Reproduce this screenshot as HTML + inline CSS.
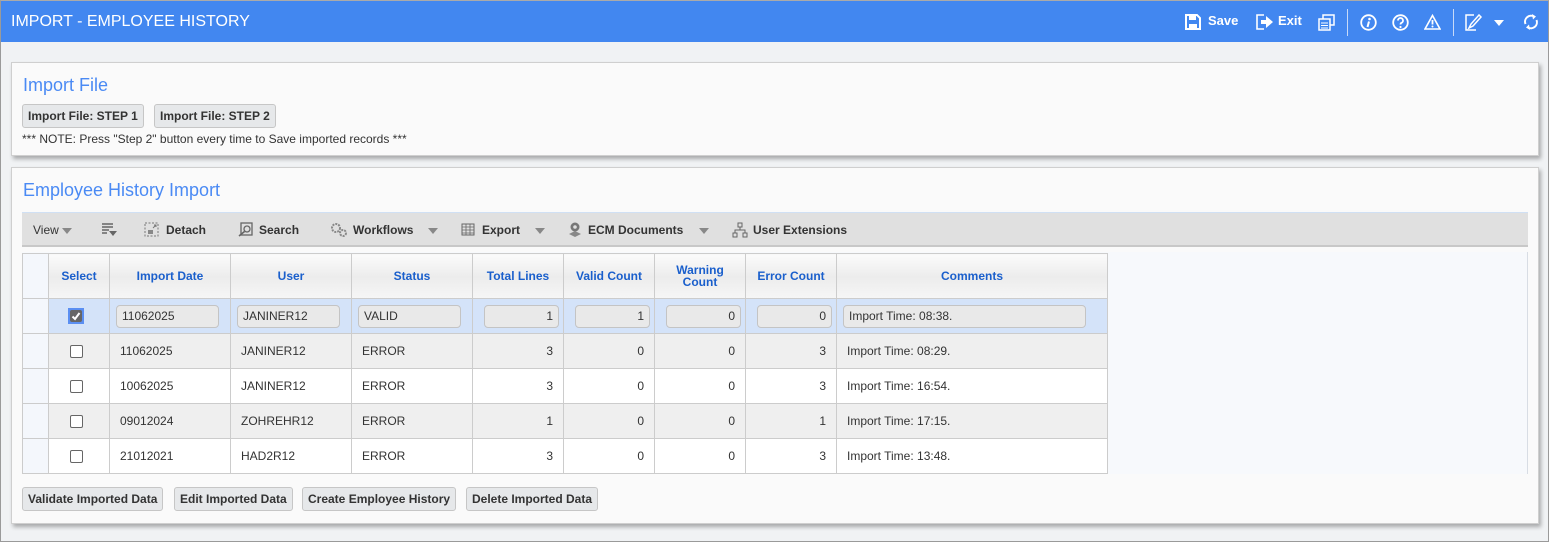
<!DOCTYPE html>
<html><head><meta charset="utf-8">
<style>
*{box-sizing:border-box;margin:0;padding:0}
body{width:1549px;height:542px;overflow:hidden;font-family:"Liberation Sans",Arial,sans-serif;font-size:12px;color:#333;background:#f0f2f4;position:relative}
.frame{position:absolute;left:0;top:0;width:1549px;height:542px;border:1px solid #9a9a9a;border-top:1px solid #aaa}
.hdr{position:absolute;left:1px;top:1px;width:1547px;height:41px;background:#4287f0;color:#fff}
.hdr .t{position:absolute;left:10px;top:12px;font-size:16px}
.hi{position:absolute;top:12px;color:#fff;font-weight:bold;font-size:13px}
.sep{position:absolute;top:8px;width:1px;height:27px;background:#c8daf8}
.panel{position:absolute;left:11px;width:1528px;background:#fafafa;border:1px solid #cfcfcf;box-shadow:2px 3px 4px rgba(0,0,0,.3)}
.ptitle{position:absolute;left:11px;color:#4a8af4;font-size:18px}
.btn{position:absolute;height:24px;background:#e6e8ea;border:1px solid #c6c6c6;border-radius:3px;font-weight:bold;font-size:12px;line-height:22px;padding:0 5px;color:#333;white-space:nowrap}
.tb{position:absolute;left:22px;top:212px;width:1506px;height:35px;background:#e0e0e0;border-top:1px solid #d0e0f4;border-bottom:2px solid #c8c8c8}
.tbi{position:absolute;top:10px;font-size:12px;font-weight:bold;color:#333}
.ar{display:inline-block;width:0;height:0;border-left:5px solid transparent;border-right:5px solid transparent;border-top:6px solid #888;vertical-align:middle}
.grid{position:absolute;left:22px;top:252px;width:1506px;height:222px;background:#f7f9fc;border-right:1px solid #d8dde4}
table{position:absolute;left:22px;top:253px;border-collapse:collapse;table-layout:fixed}
td,th{border:1px solid #cccccc;height:35px;font-size:12px;padding:0 10px;white-space:nowrap}
th{height:45px;color:#1a5fcc;font-weight:bold;background:linear-gradient(#fbfbfb,#ececec 50%,#f6f6f6);text-align:center;line-height:12px}
tr.s td{background:#d4e3f9}
tr.g td{background:#efefef}
tr.w td{background:#fff}
td.n{text-align:right}
td.c{text-align:center;padding:0 6px 0 0}
td.rn{background:#f4f7fc!important}
td.ip{padding:0}
.inp{height:23px;background:#e9e9e9;border:1px solid #c4c4c4;border-radius:4px;line-height:21px;padding:0 5px}
.it{width:103px;margin-left:6px}
.in{width:75px;margin-left:11px;text-align:right}
.ic{width:243px;margin-left:6px}
.cb{display:inline-block;width:13px;height:13px;border:1px solid #666;border-radius:2px;background:#fff;vertical-align:middle}
.cbk{display:inline-block;width:16px;height:16px;background:#5b8ff2;padding:2px;vertical-align:middle}
.cbk span{display:block;width:12px;height:12px;background:#666;border-radius:2px;position:relative}
</style></head><body>
<div class="frame"></div>
<div class="hdr">
<div class="t">IMPORT - EMPLOYEE HISTORY</div>
<svg style="position:absolute;left:1184px;top:13px" width="16" height="16" viewBox="0 0 16 16"><path d="M1 1h11l3 3v11H1z" fill="none" stroke="#fff" stroke-width="2"/><rect x="4" y="2" width="7" height="4" fill="#fff"/><rect x="4" y="10" width="8" height="4" fill="#fff"/></svg>
<div class="hi" style="left:1207px">Save</div>
<svg style="position:absolute;left:1255px;top:13px" width="18" height="16" viewBox="0 0 18 16"><path d="M8 1H1v14h7" fill="none" stroke="#fff" stroke-width="1.6"/><path d="M5 6h5V2l7 6-7 6v-4H5z" fill="#fff"/></svg>
<div class="hi" style="left:1277px">Exit</div>
<svg style="position:absolute;left:1317px;top:13px" width="17" height="17" viewBox="0 0 17 17"><rect x="5" y="1" width="11" height="10" fill="none" stroke="#fff" stroke-width="1.5"/><rect x="1" y="5" width="11" height="11" fill="#4287f0" stroke="#fff" stroke-width="1.5"/><path d="M3 9h7M3 11.5h7M3 14h7" stroke="#fff"/></svg>
<div class="sep" style="left:1346px"></div>
<svg style="position:absolute;left:1359px;top:13px" width="17" height="17" viewBox="0 0 17 17"><circle cx="8.5" cy="8.5" r="7.3" fill="none" stroke="#fff" stroke-width="1.8"/><circle cx="9.5" cy="5" r="1.3" fill="#fff"/><path d="M9 7.5l-1.5 5.5" stroke="#fff" stroke-width="2"/></svg>
<svg style="position:absolute;left:1391px;top:13px" width="17" height="17" viewBox="0 0 17 17"><circle cx="8.5" cy="8.5" r="7.3" fill="none" stroke="#fff" stroke-width="1.8"/><path d="M6 6.5a2.5 2.5 0 1 1 3.5 2.3c-.8.4-1 .9-1 1.7" fill="none" stroke="#fff" stroke-width="1.8"/><circle cx="8.5" cy="13" r="1.1" fill="#fff"/></svg>
<svg style="position:absolute;left:1423px;top:13px" width="17" height="16" viewBox="0 0 17 16"><path d="M8.5 1.5L16 15H1z" fill="none" stroke="#fff" stroke-width="1.6"/><path d="M8.5 6v4.5" stroke="#fff" stroke-width="1.8"/><circle cx="8.5" cy="12.5" r="1" fill="#fff"/></svg>
<div class="sep" style="left:1452px"></div>
<svg style="position:absolute;left:1464px;top:13px" width="18" height="17" viewBox="0 0 18 17"><path d="M9 1H1v15h10" fill="none" stroke="#fff" stroke-width="1.5"/><path d="M4 14l2-4 8-9 2 2-8 9z" fill="none" stroke="#fff" stroke-width="1.5"/></svg>
<div style="position:absolute;left:1493px;top:19px;width:0;height:0;border-left:5px solid transparent;border-right:5px solid transparent;border-top:6px solid #fff"></div>
<svg style="position:absolute;left:1521px;top:12px" width="18" height="18" viewBox="0 0 18 18"><path d="M3.5 11A6 6 0 0 1 12 3.5" fill="none" stroke="#fff" stroke-width="2"/><path d="M14.5 7A6 6 0 0 1 6 14.5" fill="none" stroke="#fff" stroke-width="2"/><path d="M10 1l4 2.5-3 3z" fill="#fff"/><path d="M8 17l-4-2.5 3-3z" fill="#fff"/></svg>
</div>

<div class="panel" style="top:62px;height:94px">
<div class="ptitle" style="top:12px">Import File</div>
<div class="btn" style="left:10px;top:41px">Import File: STEP 1</div>
<div class="btn" style="left:142px;top:41px">Import File: STEP 2</div>
<div style="position:absolute;left:10px;top:69px;font-size:12px">*** NOTE: Press "Step 2" button every time to Save imported records ***</div>
</div>

<div class="panel" style="top:167px;height:357px">
<div class="ptitle" style="top:12px">Employee History Import</div>
<div class="btn" style="left:10px;top:319px">Validate Imported Data</div>
<div class="btn" style="left:162px;top:319px">Edit Imported Data</div>
<div class="btn" style="left:290px;top:319px">Create Employee History</div>
<div class="btn" style="left:454px;top:319px">Delete Imported Data</div>
</div>

<div class="tb">
<div class="tbi" style="left:11px;font-weight:normal">View <span class="ar"></span></div>
<svg style="position:absolute;left:79px;top:10px" width="16" height="14" viewBox="0 0 16 14"><path d="M1 1h11M1 4h11M1 7h7M1 10h5" stroke="#666" stroke-width="1.5"/><path d="M8 8h8l-4 5z" fill="#666"/></svg>
<svg style="position:absolute;left:122px;top:9px" width="15" height="15" viewBox="0 0 15 15"><rect x="1" y="1" width="13" height="13" fill="none" stroke="#777" stroke-dasharray="2 1.5"/><path d="M4 8h5v4H4z" fill="#888"/><path d="M9 6l3-3M10 3h2v2" stroke="#777"/></svg>
<div class="tbi" style="left:144px">Detach</div>
<svg style="position:absolute;left:216px;top:9px" width="15" height="15" viewBox="0 0 15 15"><rect x="3" y="1" width="11" height="12" fill="none" stroke="#666" stroke-width="1.3"/><circle cx="9" cy="7" r="3" fill="none" stroke="#666" stroke-width="1.3"/><path d="M6.5 9.5L1 14" stroke="#666" stroke-width="1.6"/></svg>
<div class="tbi" style="left:237px">Search</div>
<svg style="position:absolute;left:308px;top:9px" width="20" height="16" viewBox="0 0 20 16"><circle cx="6" cy="6" r="4" fill="none" stroke="#888" stroke-width="2" stroke-dasharray="2 1"/><circle cx="13" cy="11" r="3" fill="none" stroke="#888" stroke-width="2" stroke-dasharray="2 1"/></svg>
<div class="tbi" style="left:331px">Workflows</div>
<span class="ar" style="position:absolute;left:406px;top:15px"></span>
<svg style="position:absolute;left:439px;top:10px" width="15" height="14" viewBox="0 0 15 14"><rect x="1" y="1" width="12" height="11" fill="none" stroke="#666"/><path d="M1 4h12M1 7h12M1 10h12M5 1v11M9 1v11" stroke="#666" stroke-width=".8"/></svg>
<div class="tbi" style="left:460px">Export</div>
<span class="ar" style="position:absolute;left:513px;top:15px"></span>
<svg style="position:absolute;left:545px;top:8px" width="16" height="17" viewBox="0 0 16 17"><circle cx="8" cy="6" r="4.5" fill="#777"/><circle cx="8" cy="6" r="1.8" fill="#e0e0e0"/><path d="M2 13l6-3 6 3-6 3z" fill="#888"/></svg>
<div class="tbi" style="left:566px">ECM Documents</div>
<span class="ar" style="position:absolute;left:677px;top:15px"></span>
<svg style="position:absolute;left:710px;top:9px" width="16" height="16" viewBox="0 0 16 16"><rect x="6" y="1" width="4" height="4" fill="none" stroke="#666"/><rect x="1" y="11" width="4" height="4" fill="none" stroke="#666"/><rect x="11" y="11" width="4" height="4" fill="none" stroke="#666"/><path d="M8 5v3M3 11V8h10v3" fill="none" stroke="#666"/></svg>
<div class="tbi" style="left:731px">User Extensions</div>
</div>

<div class="grid"></div>
<table>
<colgroup><col style="width:26px"><col style="width:61px"><col style="width:121px"><col style="width:121px"><col style="width:121px"><col style="width:91px"><col style="width:91px"><col style="width:91px"><col style="width:91px"><col style="width:271px"></colgroup>
<tr><th style="background:#f4f7fc"></th><th>Select</th><th>Import Date</th><th>User</th><th>Status</th><th>Total Lines</th><th>Valid Count</th><th>Warning<br>Count</th><th>Error Count</th><th>Comments</th></tr>
<tr class="s"><td class="rn"></td><td class="c"><span class="cbk"><span><svg width="12" height="12" viewBox="0 0 12 12" style="position:absolute;left:0;top:0"><path d="M2.5 6.5l2.5 2.5 4.5-6" fill="none" stroke="#fff" stroke-width="2"/></svg></span></span></td><td class="ip"><div class="inp it">11062025</div></td><td class="ip"><div class="inp it">JANINER12</div></td><td class="ip"><div class="inp it">VALID</div></td><td class="ip"><div class="inp in">1</div></td><td class="ip"><div class="inp in">1</div></td><td class="ip"><div class="inp in">0</div></td><td class="ip"><div class="inp in">0</div></td><td class="ip"><div class="inp ic">Import Time: 08:38.</div></td></tr>
<tr class="g"><td class="rn"></td><td class="c"><span class="cb"></span></td><td>11062025</td><td>JANINER12</td><td>ERROR</td><td class="n">3</td><td class="n">0</td><td class="n">0</td><td class="n">3</td><td>Import Time: 08:29.</td></tr>
<tr class="w"><td class="rn"></td><td class="c"><span class="cb"></span></td><td>10062025</td><td>JANINER12</td><td>ERROR</td><td class="n">3</td><td class="n">0</td><td class="n">0</td><td class="n">3</td><td>Import Time: 16:54.</td></tr>
<tr class="g"><td class="rn"></td><td class="c"><span class="cb"></span></td><td>09012024</td><td>ZOHREHR12</td><td>ERROR</td><td class="n">1</td><td class="n">0</td><td class="n">0</td><td class="n">1</td><td>Import Time: 17:15.</td></tr>
<tr class="w"><td class="rn"></td><td class="c"><span class="cb"></span></td><td>21012021</td><td>HAD2R12</td><td>ERROR</td><td class="n">3</td><td class="n">0</td><td class="n">0</td><td class="n">3</td><td>Import Time: 13:48.</td></tr>
</table>
</body></html>
